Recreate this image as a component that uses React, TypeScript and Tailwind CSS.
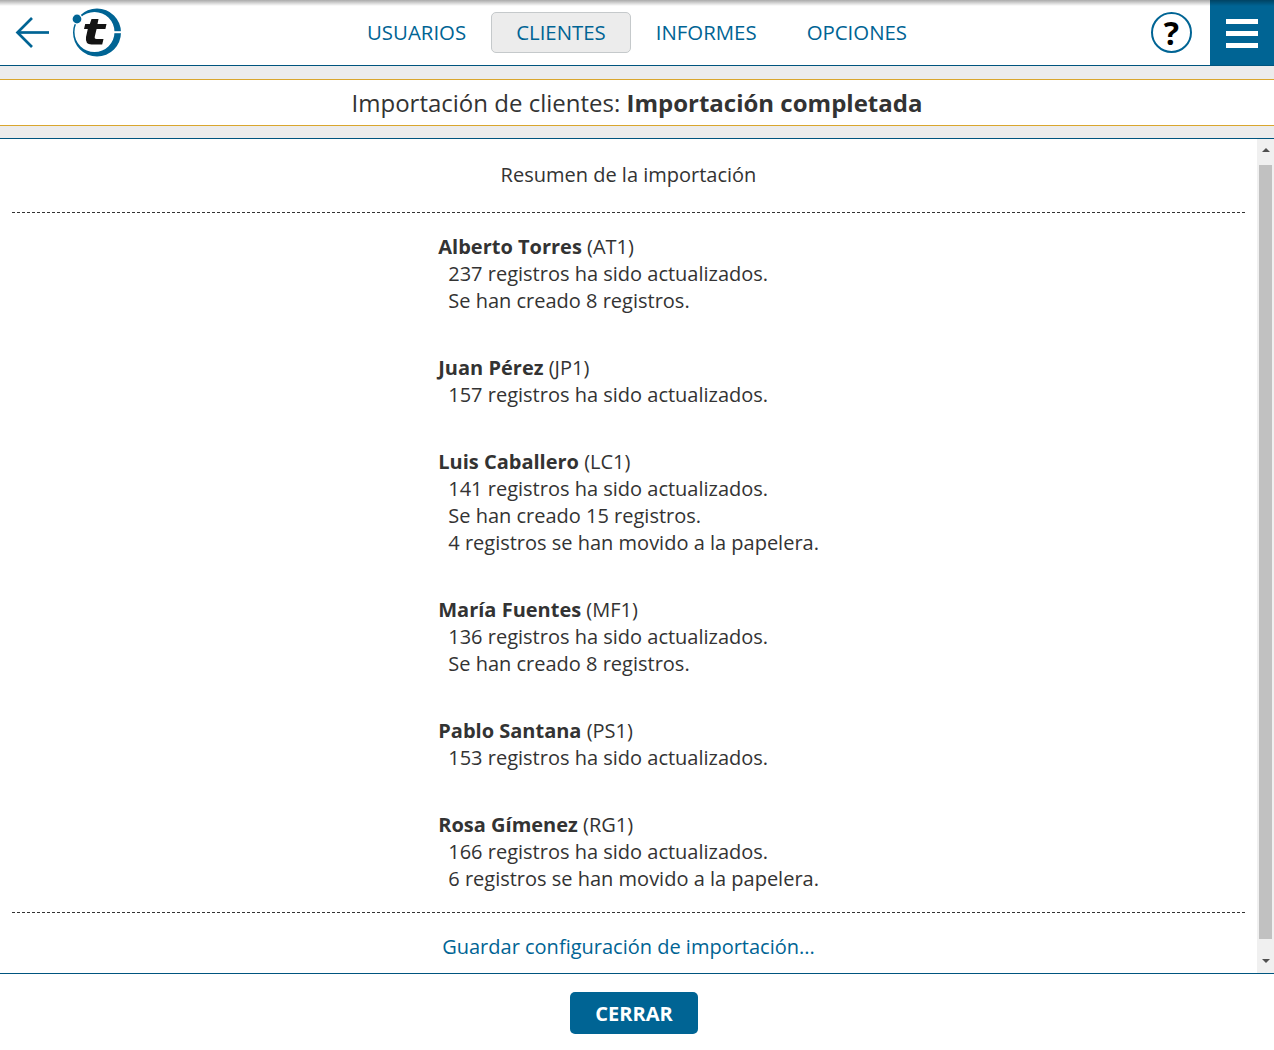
const navItems = [
  { name: "USUARIOS", active: false },
  { name: "CLIENTES", active: true },
  { name: "INFORMES", active: false },
  { name: "OPCIONES", active: false },
];

const results = [
  { name: "Alberto Torres", code: "AT1", lines: ["237 registros ha sido actualizados.", "Se han creado 8 registros."] },
  { name: "Juan Pérez", code: "JP1", lines: ["157 registros ha sido actualizados."] },
  {
    name: "Luis Caballero",
    code: "LC1",
    lines: ["141 registros ha sido actualizados.", "Se han creado 15 registros.", "4 registros se han movido a la papelera."],
  },
  { name: "María Fuentes", code: "MF1", lines: ["136 registros ha sido actualizados.", "Se han creado 8 registros."] },
  { name: "Pablo Santana", code: "PS1", lines: ["153 registros ha sido actualizados."] },
  { name: "Rosa Gímenez", code: "RG1", lines: ["166 registros ha sido actualizados.", "6 registros se han movido a la papelera."] },
];

function BackArrow() {
  return (
    <svg width="36" height="36" viewBox="0 0 36 36" className="block" fill="none" stroke="#006494" strokeWidth="2.7">
      <path d="M17 3 L2.5 17.5 L17 32" />
      <path d="M2.5 17.5 L34 17.5" />
    </svg>
  );
}

function Logo() {
  return (
    <svg width="50" height="50" viewBox="0 0 50 50" className="block">
      <path
        fillRule="evenodd"
        d="M1 24.5 A24 24 0 1 1 49 24.5 A24 24 0 1 1 1 24.5 Z M2.5 24 A20 20 0 1 0 42.5 24 A20 20 0 1 0 2.5 24 Z"
        fill="#006494"
      />
      <rect x="40" y="23.2" width="10" height="2" fill="#ffffff" />
      <circle cx="5" cy="11" r="5" fill="#006494" stroke="#ffffff" strokeWidth="1.2" />
      <path
        d="M19.5 11 L26.5 11 L25.5 16 L34.5 16 L33.4 21 L24.6 21 L22.8 28.5 Q22.2 31 24.6 31 L31.5 31 L30.2 36.5 L19.5 36.5 Q13 36.5 14 29 L15.8 21 L12 21 L13.2 16 L17.8 16 Z"
        fill="#141414"
      />
    </svg>
  );
}

function HelpIcon() {
  return (
    <div className="flex h-[41px] w-[41px] items-center justify-center rounded-full border-2 border-[#006494] bg-white">
      <span className="text-[32px] leading-none font-bold text-black">?</span>
    </div>
  );
}

function Scrollbar() {
  return (
    <div className="flex w-[17px] shrink-0 flex-col items-center bg-[#f0f0f0]">
      <div className="flex h-[26px] w-full items-center justify-center pb-[4px]">
        <div className="h-0 w-0 border-x-[4px] border-b-[4px] border-x-transparent border-b-[#505050]" />
      </div>
      <div className="w-[13px] flex-1 bg-[#c1c1c1]" />
      <div className="flex h-[34px] w-full items-center justify-center pt-[10px]">
        <div className="h-0 w-0 border-x-[4px] border-t-[4px] border-x-transparent border-t-[#505050]" />
      </div>
    </div>
  );
}

export default function App() {
  return (
    <div className="flex h-[1050px] w-full flex-col overflow-hidden bg-white font-['Open_Sans',sans-serif] text-[#333333]">
      {/* Top nav */}
      <header className="relative flex h-[66px] shrink-0 items-center border-b border-[#00557f] bg-white">
        <div className="absolute inset-x-0 top-0 z-20 h-[6px] bg-gradient-to-b from-[#00000055] to-transparent" />
        <div className="flex w-[147px] shrink-0 items-center pl-[15px]">
          <BackArrow />
          <div className="ml-[21px]">
            <Logo />
          </div>
        </div>
        <nav className="ml-[195px] flex items-center">
          {navItems.map((item) => (
            <a
              key={item.name}
              className={
                item.active
                  ? "flex h-[41px] items-center rounded-[5px] border border-[#c5c9cb] bg-[#ececec] px-[24px] text-[20.4px] font-medium text-[#006494]"
                  : "flex h-[41px] items-center px-[25px] text-[20.4px] font-medium text-[#006494]"
              }
            >
              {item.name}
            </a>
          ))}
        </nav>
        <div className="ml-auto flex items-center">
          <div className="mr-[18px]">
            <HelpIcon />
          </div>
          <div className="relative z-10 -mt-[1px] flex h-[66px] w-[64px] flex-col items-center justify-center gap-[7px] bg-[#006494] pt-[3px]">
            <div className="h-[5px] w-[32px] bg-white" />
            <div className="h-[5px] w-[32px] bg-white" />
            <div className="h-[5px] w-[32px] bg-white" />
          </div>
        </div>
      </header>

      {/* Title band */}
      <div className="h-[14px] shrink-0 border-b border-[#d9a62e] bg-[#ececec]" />
      <div className="flex h-[45px] shrink-0 items-center justify-center bg-white text-[24px]">
        <span>
          Importación de clientes: <b className="font-bold">Importación completada</b>
        </span>
      </div>
      <div className="h-[14px] shrink-0 border-y border-y-[#d9a62e] border-b-[#00557f] bg-[#ececec]" />

      {/* Summary */}
      <main className="flex h-[834px] shrink-0">
        <div className="flex-1 px-[12px] text-[20px] leading-[27px]">
          <div className="flex h-[74px] items-center justify-center border-b border-dashed border-[#333333] pb-[3px]">
            Resumen de la importación
          </div>
          <div className="flex h-[699px] flex-col gap-[40px] pt-[20px] pl-[426.25px]">
            {results.map((r) => (
              <div key={r.code}>
                <div>
                  <b className="font-bold">{r.name}</b> ({r.code})
                </div>
                {r.lines.map((line) => (
                  <div key={line} className="pl-[10px]">
                    {line}
                  </div>
                ))}
              </div>
            ))}
          </div>
          <div className="flex h-[60px] items-center justify-center border-t border-dashed border-[#333333] pt-[8px] text-[#006494]">
            Guardar configuración de importación...
          </div>
        </div>
        <Scrollbar />
      </main>

      {/* Footer */}
      <footer className="flex flex-1 justify-center border-t border-[#00557f] pt-[18px] pr-[6px]">
        <button className="h-[42px] w-[128px] rounded-[5px] bg-[#006494] pt-[2px] text-[20px] font-bold text-white">CERRAR</button>
      </footer>
    </div>
  );
}
